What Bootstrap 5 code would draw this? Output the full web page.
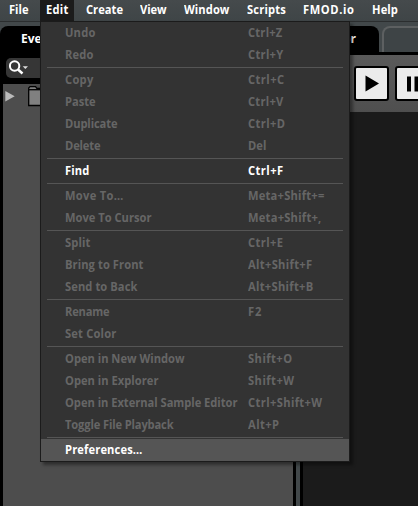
<!DOCTYPE html>
<html lang="en">
<head>
<meta charset="utf-8">
<title>FMOD Studio</title>
<link href="https://cdn.jsdelivr.net/npm/bootstrap@5.3.0/dist/css/bootstrap.min.css" rel="stylesheet">
<style>
body{width:418px;height:506px;background:#42484a;font:700 12px/22px "Open Sans","Noto Sans",sans-serif;color:#fff}
.menubar{height:22px;background:linear-gradient(#454a4c,#3f4547);border-bottom:1px solid #2b2e2f}
.menubar .nav-link{padding:0;height:21px;line-height:20px;color:#fff;font-weight:700;white-space:nowrap}
.menubar .nav-link.active{background:#1b1b1b}
.work{height:484px;padding-top:4px}
.browser{width:296px;flex:none;background:#000;border-top-left-radius:8px;padding:0 3px}
.browser-tab{height:32px;padding:2px 0 0 18px}
.search{height:20px;margin:0 3px 6px;background:#363636;border-radius:5px;padding-left:3px}
.tree{background:#4d4d4d;padding:1px 0 0 2px}
.splitter{width:4px;flex:none}
.editor{width:118px;flex:none}
.tab-on{width:79px;height:26px;background:#000;border-radius:0 8px 0 0;padding:2px 23px 0 0;line-height:22px}
.tab-off{width:50px;height:26px;margin-left:3px;border:2px solid #5d6061;border-bottom:0;border-radius:8px 0 0 0;background:#3e4446}
.edit-body{border-left:3px solid #000;border-top:3px solid #000;background:#1b1b1b}
.transport{height:57px;background:linear-gradient(#5a5a5a,#4f4f4f);padding:11px 0 0 51px;gap:6px}
.tool{width:35px;height:35px;flex:none;border:2px solid #000;border-radius:3px;background:#ebebeb}
.edit-menu{position:absolute;left:40px;top:21px;width:310px;height:441px;background:#333;border:1px solid #1b1b1b;box-shadow:3px 3px 3px rgba(0,0,0,.4)}
.entry{height:22px;padding-left:24px;color:#666;white-space:pre;line-height:22px}
.entry .name{width:183px;flex:none}
.entry.on{color:#fff}
.entry.hot{background:#555}
.rule{height:1px;margin:1px 6px;background:#555}
.fit{display:inline-block;transform:scaleX(.93);transform-origin:0 0}
</style>
<script src="https://cdn.jsdelivr.net/npm/bootstrap@5.3.0/dist/js/bootstrap.bundle.min.js"></script>
</head>
<body class="position-relative overflow-hidden">
<nav class="menubar nav flex-nowrap">
<a class="nav-link" style="width:40px"><span class="fit" data-x="9" data-w="19">File</span></a>
<a class="nav-link active" style="width:34px"><span class="fit" data-x="6" data-w="22">Edit</span></a>
<a class="nav-link" style="width:54px"><span class="fit" data-x="12" data-w="36.5">Create</span></a>
<a class="nav-link" style="width:44px"><span class="fit" data-x="12" data-w="26">View</span></a>
<a class="nav-link" style="width:64px"><span class="fit" data-x="12" data-w="45">Window</span></a>
<a class="nav-link" style="width:56px"><span class="fit" data-x="11" data-w="38.5">Scripts</span></a>
<a class="nav-link" style="width:68px"><span class="fit" data-x="11" data-w="51">FMOD.io</span></a>
<a class="nav-link" style="width:50px"><span class="fit" data-x="12" data-w="25.5">Help</span></a>
</nav>
<main class="work d-flex">
<section class="browser d-flex flex-column">
<div class="browser-tab">Events</div>
<div class="search d-flex align-items-center"><svg width="22" height="20" viewBox="0 0 22 20"><circle cx="5.600" cy="8" r="4.700" fill="none" stroke="#fff" stroke-width="2"/><path d="M9 11.500l4.500 4" stroke="#fff" stroke-width="2.500"/><path d="M13.700 8.300H19l-2.650 2.700z" fill="#ddd"/></svg></div>
<div class="tree flex-grow-1"><svg class="d-block" width="50" height="24" viewBox="0 0 50 24"><path d="M.3 6l9.400 5.200-9.400 5.200z" fill="#bbb"/><path d="M23.700 20.500V3L25 1.600h5.500L32 3.500h12v17z" fill="#808080" stroke="#000" stroke-width="1.300"/><path d="M24 4.700h20" stroke="#000" stroke-width="1.300"/></svg></div>
</section>
<div class="splitter"></div>
<section class="editor d-flex flex-column">
<div class="d-flex"><div class="tab-on text-end flex-shrink-0">Editor</div><div class="tab-off flex-shrink-0"></div></div>
<div class="edit-body flex-grow-1">
<div class="transport d-flex">
<div class="tool"><svg class="d-block" width="31" height="31" viewBox="0 0 31 31"><path d="M9.500 7.500v16l13.500-8z"/></svg></div>
<div class="tool"><svg class="d-block" width="31" height="31" viewBox="0 0 31 31"><path d="M10 8.500h4v15h-4zM17.500 8.500h4v15h-4z"/></svg></div>
</div>
</div>
</section>
</main>
<div class="edit-menu" id="menu"></div>
<script>
const entries=[["Undo",30,"Ctrl+Z",34],["Redo",28,"Ctrl+Y",35],0,["Copy",28,"Ctrl+C",36],["Paste",30,"Ctrl+V",35],["Duplicate",52,"Ctrl+D",37],["Delete",35,"Del",18],0,["Find",24,"Ctrl+F",35,"on"],0,["Move To…",58,"Meta+Shift+=",76],["Move To Cursor",86,"Meta+Shift+,",73],0,["Split",25,"Ctrl+E",35],["Bring to Front",78,"Alt+Shift+F",64],["Send to Back",72,"Alt+Shift+B",65],0,["Rename",44,"F2",14],["Set Color",51,"",0],0,["Open in New Window",119,"Shift+O",44],["Open in Explorer",93,"Shift+W",46],["Open in External Sample Editor",172,"Ctrl+Shift+W",74],["Toggle File Playback",108,"Alt+P",31],0,["Preferences…",77,"",0,"on hot"]];
document.getElementById("menu").innerHTML=entries.map(e=>e?`<div class="entry d-flex ${e[4]||""}"><div class="name"><span class="fit" data-w="${e[1]}">${e[0]}</span></div><span class="fit" data-w="${e[3]}">${e[2]}</span></div>`:'<div class="rule"></div>').join("");
document.querySelectorAll(".fit").forEach(s=>{
 if(!s.textContent)return;
 if(s.dataset.x)s.style.marginLeft=s.dataset.x+"px";
 const w=s.getBoundingClientRect().width/.93;
 s.style.letterSpacing=(((+s.dataset.w+.5)/.93-w)/s.textContent.length).toFixed(3)+"px";
});
</script>
</body>
</html>
